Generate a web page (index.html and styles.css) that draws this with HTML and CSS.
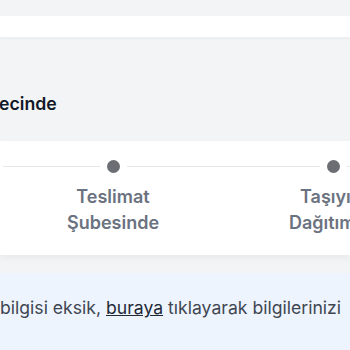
FILE: index.html
```html
<!DOCTYPE html>
<html lang="tr">
  <head>
    <meta charset="utf-8" />
    <title>Kargo Takip</title>
    <link rel="stylesheet" href="styles.css">
  </head>
  <body>
    <div class="topbar"></div>

    <h2 class="title">ecinde</h2>

    <div class="card">
      <div class="steps">
        <div class="step">
          <div class="track"><span class="line"></span><span class="dot"></span><span class="line"></span></div>
          <div class="label">Teslimat<br />Şubesinde</div>
        </div>
        <div class="step">
          <div class="track"><span class="line"></span><span class="dot"></span><span class="line"></span></div>
          <div class="label">Taşıyıcı<br />Dağıtımda</div>
        </div>
      </div>
    </div>

    <div class="notice">
      <p>bilgisi eksik, <a href="#">buraya</a> tıklayarak bilgilerinizi</p>
    </div>
  </body>
</html>
```

FILE: styles.css
```css
/* genel */
body {
  margin: 0;
  padding: 0;
  background-color: #f3f4f6;
  font-family: Inter, "Noto Sans", sans-serif;
  overflow: hidden;
}

/* 1. üstteki beyaz şerit */
.topbar {
  height: 21px;
  margin-top: 16px;
  background-color: #ffffff;
  box-shadow: 0 2px 3px rgba(0, 0, 0, 0.03);
}

/* 2. başlık */
.title {
  margin: 55px 0 25px -1px;
  font-size: 17.7px;
  line-height: 24px;
  font-weight: 600;
  color: #111827;
  white-space: nowrap;
}

/* 3. adımlar kartı */
.card {
  background-color: #ffffff;
  padding: 19px 0 19px 0;
  box-shadow: 0 3px 8px rgba(0, 0, 0, 0.05);
}
.steps {
  display: flex;
  margin-left: 3px;
}
.step {
  flex: 0 0 220px;
  display: flex;
  flex-direction: column;
  align-items: center;
}
.track {
  width: 100%;
  display: flex;
  align-items: center;
  gap: 7px;
}
.line {
  flex: 1;
  height: 1px;
  background-color: #e5e7eb;
}
.dot {
  width: 13px;
  height: 13px;
  border-radius: 50%;
  background-color: #6b6e73;
}
.label {
  margin-top: 11px;
  font-size: 18px;
  line-height: 26px;
  font-weight: 600;
  color: #6b7280;
  text-align: center;
  white-space: nowrap;
}

/* 4. bilgi kutusu */
.notice {
  margin-top: 18px;
  height: 100px;
  background-color: #eef4fd;
  padding-top: 22px;
}
.notice p {
  margin: 0;
  font-size: 17.6px;
  line-height: 26px;
  color: #3f4652;
  white-space: nowrap;
}
.notice a {
  color: #1f2937;
  text-decoration: underline;
}
```
